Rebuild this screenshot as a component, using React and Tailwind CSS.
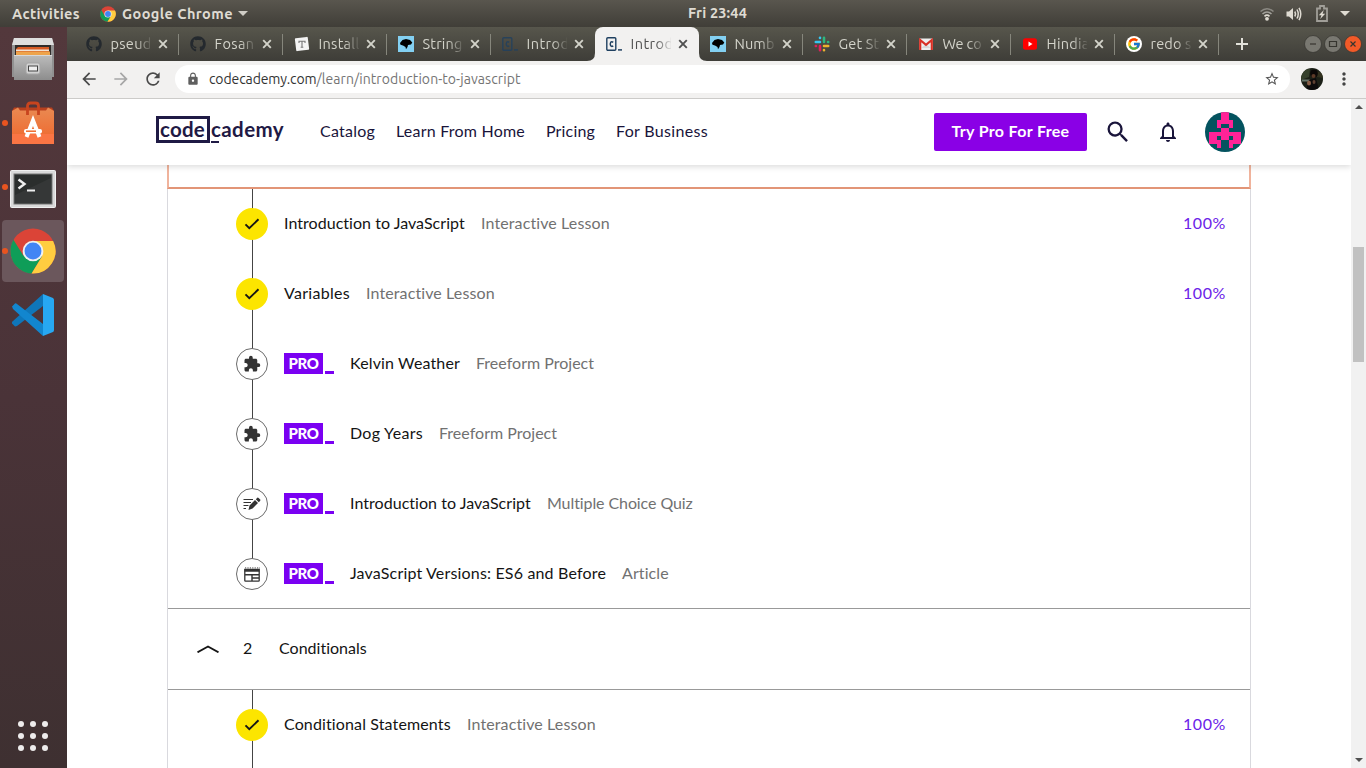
import { useLayoutEffect, useRef, useState } from 'react';
import { MdArrowBack, MdArrowForward, MdRefresh, MdLock, MdStarBorder, MdMoreVert, MdSearch, MdNotificationsNone, MdExtension, MdAdd } from 'react-icons/md';
import { FaGithub } from 'react-icons/fa';
import { FcGoogle } from 'react-icons/fc';

/* Text whose letter spacing is adjusted so that it fills a given width. */
function Fit({ w, className = '', children }) {
  const ref = useRef(null);
  const [ls, setLs] = useState(0);
  useLayoutEffect(() => {
    const natural = ref.current.getBoundingClientRect().width;
    setLs((w - natural) / String(children).length);
  }, [w, children]);
  return (
    <span className={'block shrink-0 whitespace-nowrap ' + className} style={{ width: w }}>
      <span ref={ref} className="inline-block" style={{ letterSpacing: ls }}>{children}</span>
    </span>
  );
}

function ChromeLogo({ className }) {
  return (
    <svg viewBox="0 0 48 48" className={className}>
      <circle cx="24" cy="24" r="23.5" fill="#db4437" />
      <path d="M3.6 12.3A23.5 23.5 0 0 0 22.5 47.5L33.5 29.5L24 24L14 29Z" fill="#0f9d58" />
      <path d="M24 13.5H45A23.5 23.5 0 0 1 22.5 47.5L33.5 29.5Z" fill="#ffcd40" />
      <circle cx="24" cy="24" r="10.8" fill="#f1f1f1" />
      <circle cx="24" cy="24" r="8.8" fill="#4285f4" />
    </svg>
  );
}

const Github = () => <FaGithub className="size-4 text-[#24292e]" />;
const Typo = () => (
  <svg viewBox="0 0 16 16" className="size-4">
    <rect x="1.5" y="1.5" width="13" height="13" rx="1" fill="#f4f4f4" transform="rotate(-7 8 8)" />
    <path d="M5 7V5.2H11V7M8 5.2V11.5M6.7 11.3H9.3" stroke="#777" strokeWidth="1.1" fill="none" />
  </svg>
);
const Mdn = () => (
  <svg viewBox="0 0 16 16" className="size-4">
    <rect width="16" height="16" fill="#83d0f2" />
    <path d="M2 7L4.5 4L8 3L12 4L14.3 6.5L13 8.5L10 9L9.5 11L8 13.2L7.5 11L5 9.5L2.5 8.8Z" fill="#000" />
  </svg>
);
const Cc = () => (
  <svg viewBox="0 0 16 16" className="size-4">
    <rect x="0.8" y="1.8" width="9" height="12.5" rx="1" fill="none" stroke="#1f4060" strokeWidth="1.4" />
    <path d="M7.2 6.3Q5.8 5.2 4.7 6.3Q3.7 8 4.7 9.8Q5.8 10.9 7.2 9.8" fill="none" stroke="#1f4060" strokeWidth="1.5" />
    <path d="M12 13.9H16" stroke="#1f4060" strokeWidth="1.5" />
  </svg>
);
const Slack = () => (
  <svg viewBox="0 0 16 16" className="size-4" strokeWidth="2.6" strokeLinecap="round">
    <path d="M1.8 6H6M6 1.8V2" stroke="#36c5f0" />
    <path d="M10 1.8V6M14.2 6H14" stroke="#2eb67d" />
    <path d="M10 10H14.2M10 14.2V14" stroke="#ecb22e" />
    <path d="M6 10V14.2M1.8 10H2" stroke="#e01e5a" />
  </svg>
);
const Gmail = () => (
  <svg viewBox="0 0 16 16" className="size-4">
    <rect x="1" y="2.5" width="14" height="11.5" rx="1" fill="#eee" />
    <path d="M3.3 12L8 8L12.7 12Z" fill="#d8d8d8" />
    <path d="M2.2 14V4L8 8.8L13.8 4V14" fill="none" stroke="#d93025" strokeWidth="2.2" />
  </svg>
);
const Youtube = () => (
  <svg viewBox="0 0 16 16" className="size-4">
    <rect x="1" y="2.3" width="14" height="11.4" rx="2.5" fill="#f00" />
    <path d="M6.5 5.5L10.5 8L6.5 10.5Z" fill="#fff" />
  </svg>
);
const Google = () => (
  <span className="flex size-4 items-center justify-center rounded-full bg-white"><FcGoogle className="size-3.5" /></span>
);

const tabs = [
  [Github, 'pseud', 41], [Github, 'Fosan', 40], [Typo, 'Install', 41], [Mdn, 'String', 40], [Cc, 'Introd', 43],
  [Cc, 'Introd', 43], [Mdn, 'Numb', 40], [Slack, 'Get St', 41], [Gmail, 'We co', 39], [Youtube, 'Hindia', 43], [Google, 'redo s', 41],
];

function Tab({ icon: Icon, label, w, active, dim, sep }) {
  return (
    <div className={'relative flex h-[34px] w-[104px] shrink-0 items-center pl-[11px] ' + (active ? 'rounded-t-lg bg-[#f2f1f0] text-[#505050]' : 'text-[#d3d3ca]')}>
      <span className={'w-4 ' + (dim ? 'opacity-80' : '')}><Icon /></span>
      <div className="ml-[8.5px] w-[40.5px] overflow-hidden text-[14.5px] leading-5 [mask-image:linear-gradient(90deg,#000_62%,transparent_105%)]">
        <Fit w={w}>{label}</Fit>
      </div>
      <svg viewBox="0 0 10 10" className="ml-[7px] size-[10px]"><path d="M1.200 1.200L8.800 8.800M8.800 1.200L1.200 8.800" fill="none" stroke="currentColor" strokeWidth="1.900" /></svg>
      {sep && <span className="absolute right-0 top-[7px] h-[21px] w-px bg-[#86867c]" />}
      {active && (
        <>
          <svg viewBox="0 0 8 8" className="absolute bottom-0 -left-2 size-2"><path d="M8 0V8H0Q8 8 8 0Z" fill="#f2f1f0" /></svg>
          <svg viewBox="0 0 8 8" className="absolute bottom-0 -right-2 size-2"><path d="M0 0V8H8Q0 8 0 0Z" fill="#f2f1f0" /></svg>
        </>
      )}
    </div>
  );
}

function TopBar() {
  return (
    <div className="grid h-[27px] grid-cols-[688px_60px_1fr] items-center bg-linear-to-b from-[#59564e] to-[#403e38] text-[14.5px] font-semibold leading-5 text-[#dfdbd2]">
      <div className="flex items-center pl-3">
        <Fit w={68}>Activities</Fit>
        <ChromeLogo className="ml-5 size-4" />
        <Fit w={111} className="ml-1.5">Google Chrome</Fit>
        <svg viewBox="0 0 10 5" className="ml-[5px] h-[5px] w-[10px]"><path d="M0 0H10L5 5Z" fill="#d0cdc6" /></svg>
      </div>
      <Fit w={59} className="-mt-px">Fri 23:44</Fit>
      <div className="flex items-center justify-end pr-4">
        <svg viewBox="0 0 14 14" className="size-[14px]" fill="none" strokeWidth="1.6">
          <path d="M0.5 4.5Q7 -1 13.5 4.5" stroke="#8b8983" /><path d="M2.5 7Q7 3 11.5 7" stroke="#a3a19b" />
          <path d="M4.5 9.3Q7 7 9.5 9.3" stroke="#dfdbd2" /><circle cx="7" cy="11.8" r="1.9" fill="#dfdbd2" />
        </svg>
        <svg viewBox="0 0 16 16" className="ml-3 size-4" fill="none" stroke="#dfdbd2" strokeWidth="1.5">
          <path d="M0.5 5.5H3L7 2V14L3 10.5H0.5Z" fill="#dfdbd2" stroke="none" />
          <path d="M8.8 5.5Q10.3 8 8.8 10.5M11 3.5Q13.5 8 11 12.5" /><path d="M13 1.8Q16.5 8 13 14.2" />
        </svg>
        <svg viewBox="0 0 12 17" className="ml-[14px] h-[17px] w-3">
          <path d="M1 3.5H4V1H8V3.5H11V16H1Z" fill="none" stroke="#a09e98" strokeWidth="1.8" />
          <path d="M7.8 5L2.8 10.300H5.5L4.2 14L9.2 8.700H6.5Z" fill="#dfdbd2" />
        </svg>
        <svg viewBox="0 0 10 5" className="ml-3 h-[5px] w-[10px]"><path d="M0 0H10L5 5Z" fill="#dfdbd2" /></svg>
      </div>
    </div>
  );
}

function DockItem({ children, running, active }) {
  return (
    <div className="relative flex h-16 w-full items-center justify-center">
      <div className={'flex size-[62px] items-center justify-center rounded-[4px] ' + (active ? 'bg-[#6b575c]' : '')}>{children}</div>
      {running && <span className="absolute left-[2px] top-[29px] size-[6px] rounded-full bg-[#e95420]" />}
    </div>
  );
}

function Dock() {
  return (
    <aside className="flex w-[67px] shrink-0 flex-col bg-linear-to-b from-[#53383c] via-[#4a3338] to-[#3e3031] pr-px">
      <DockItem>
        <svg viewBox="0 0 42 44" className="h-11 w-[42px]">
          <defs><linearGradient id="cab" x2="0" y2="1"><stop stopColor="#bcbcbc" /><stop offset="1" stopColor="#8d8d8d" /></linearGradient></defs>
          <path d="M2 1H40L42 8V40H0V8Z" fill="#919191" /><path d="M2 1H40L42 8H0Z" fill="#dedede" />
          <rect x="3" y="8" width="36" height="14" fill="#302c2a" />
          <path d="M6 10H37V22H4V12Z" fill="#d65b24" /><path d="M4 12.500H37V14H4Z" fill="#f0e2d6" /><path d="M4 14.500H38V22H4Z" fill="#eea44c" />
          <path d="M2 18H40V43H2Z" fill="url(#cab)" /><path d="M2 18H40V19H2Z" fill="#d8d8d8" />
          <rect x="14" y="26" width="14" height="11" rx="2" fill="#d2d2d2" stroke="#a5a5a5" />
          <rect x="16.5" y="29" width="9" height="5" fill="#eee" stroke="#444" />
        </svg>
      </DockItem>
      <DockItem running>
        <svg viewBox="0 0 42 44" className="h-11 w-[42px]">
          <defs><linearGradient id="bag" x2="0" y2="1"><stop stopColor="#e98a52" /><stop offset="1" stopColor="#f0652b" /></linearGradient></defs>
          <path d="M2 6.500H40L42 10H0Z" fill="#b8401e" /><path d="M0 10L6 6.500L8 9.500H34L36 6.500L42 10V43H0Z" fill="url(#bag)" />
          <path d="M0 33H42V43H0Z" fill="#fa7544" />
          <path d="M15.500 14V5Q15.500 2 18.500 2H23.500Q26.500 2 26.500 5V14" fill="none" stroke="#c8441e" strokeWidth="2.800" />
          <path d="M14.500 36L21 19.500L27.500 36" fill="none" stroke="#fff" strokeWidth="4" />
          <rect x="12" y="28" width="18" height="4.5" rx="2" fill="#fff" /><path d="M14 30.2H24" stroke="#ef6a2c" strokeWidth="1.5" />
        </svg>
      </DockItem>
      <DockItem running>
        <svg viewBox="0 0 46 38" className="mt-[3px] h-[38px] w-[46px]">
          <rect x="0.5" y="0.5" width="45" height="37" rx="1" fill="#d9d9d9" stroke="#f0f0f0" />
          <rect x="4" y="4" width="38" height="30" fill="#2b2e2d" stroke="#777" /><path d="M5 25L41 8V33H5Z" fill="#3c3e3d" opacity=".6" />
          <path d="M8.5 9.5L14.5 14L8.5 18.5" fill="none" stroke="#eee" strokeWidth="2.4" /><path d="M17 20.5H25" stroke="#eee" strokeWidth="2" />
        </svg>
      </DockItem>
      <DockItem running active><ChromeLogo className="size-[46px]" /></DockItem>
      <DockItem>
        <svg viewBox="0 0 42 42" className="size-[42px]">
          <path d="M31 0L31 12L5 32Q3 33 2 31.500L0 29.500Q-.5 28 1 27Z" fill="#0f76b9" />
          <path d="M0 12.500L3 9.500Q4 9 5 10L31 30V42L1 15Z" fill="#1286cf" />
          <path d="M31 0L41 4Q42 5 42 6V36Q42 37.500 41 38L31 42Z" fill="#27a8f2" />
        </svg>
      </DockItem>
      <div className="mt-auto mb-[17px] ml-[18px] grid w-[30px] grid-cols-3 gap-[6px]">
        {Array.from({ length: 9 }, (_, i) => <span key={i} className="size-[6px] rounded-full bg-[#eeecec]" />)}
      </div>
    </aside>
  );
}

function BrowserChrome() {
  return (
    <>
      <div className="flex h-[34px] items-center bg-linear-to-b from-[#57564c] to-[#3e3d38] pl-[8px] pr-1">
        {tabs.map(([icon, label, w], i) => (
          <Tab key={i} icon={icon} label={label} w={w} active={i === 5} dim={i === 4} sep={i !== 4 && i !== 5} />
        ))}
        <svg viewBox="0 0 12 12" className="ml-[17px] size-3"><path d="M6 0V12M0 6H12" stroke="#e2e1da" strokeWidth="2" /></svg>
        <div className="ml-auto flex items-center gap-[2px]">
          {['M6 9H12', 'M5.500 6.500H12.500V11.500H5.500Z', 'M6.500 6.500L11.500 11.500M11.500 6.500L6.500 11.500'].map((d, i) => (
            <svg key={d} viewBox="0 0 18 18" className="size-[18px]">
              <circle cx="9" cy="9" r="8.500" className={i === 2 ? 'fill-[#f25a28]' : 'fill-[#797871]'} stroke="#3a3934" strokeWidth=".8" />
              <path d={d} fill="none" stroke="#36352f" strokeWidth="1.200" />
            </svg>
          ))}
        </div>
      </div>
      <div className="flex h-[38px] items-center border-b border-[#cccbc9] bg-[#f2f1f0] pl-3">
        <MdArrowBack className="-mt-px size-5 text-[#4a4a4a]" />
        <MdArrowForward className="-mt-px ml-3 size-5 text-[#a6a6a6]" />
        <MdRefresh className="-mt-px ml-3 size-5 text-[#4a4a4a]" />
        <div className="-mt-px ml-3 flex h-7 w-[1115px] items-center rounded-full bg-white pl-[11px] pr-[10px] text-[14px] leading-5">
          <MdLock className="size-[14px] text-[#5f5f5f]" />
          <Fit w={107.5} className="ml-[9px] text-[#333]">codecademy.com</Fit>
          <Fit w={204} className="text-[#747474]">/learn/introduction-to-javascript</Fit>
          <MdStarBorder className="ml-auto size-4 text-[#555]" />
        </div>
        <svg viewBox="0 0 22 22" className="-mt-px ml-[11px] size-[22px]">
          <defs><clipPath id="face"><circle cx="11" cy="11" r="11" /></clipPath></defs>
          <g clipPath="url(#face)">
            <rect width="22" height="22" fill="#1c2017" /><path d="M0 2L9 1L8 9L0 12Z" fill="#35402b" /><path d="M14 3L22 5V10L16 9Z" fill="#32311f" />
            <ellipse cx="13" cy="5.500" rx="3.800" ry="4" fill="#0b0807" /><ellipse cx="12.500" cy="8" rx="2" ry="2" fill="#5d3a28" />
            <path d="M1 11.500H9L8 13.500H1Z" fill="#66756a" /><path d="M8 12L15 10L18 22H5Z" fill="#0c0b0c" /><ellipse cx="8" cy="15" rx="2" ry="2.500" fill="#8a5f48" /><ellipse cx="13" cy="14" rx="1.500" ry="2" fill="#5e4032" />
          </g>
        </svg>
        <MdMoreVert className="-mt-px ml-[11px] size-5 text-[#444]" />
      </div>
    </>
  );
}

const face = ['0000110000', '0000110000', '0001111000', '0001001000', '0000110000', '0111111110', '0110110110', '0111001110', '0001001000', '0000000000'];

function SiteHeader() {
  return (
    <header className="relative z-10 flex h-[66px] shrink-0 items-center bg-white pl-[89px] font-['Lato','Noto_Sans',sans-serif] text-[16px] leading-6 text-[#19143a] shadow-[0_2px_6px_rgba(0,0,0,0.14)]">
      <div className="-mt-[5px] flex h-[27px] w-[128px] items-center text-[20.5px] leading-[22px] font-bold text-[#1f1a45]">
        <div className="flex h-[27px] w-[54px] shrink-0 items-center border-[3px] border-[#1f1a45] pl-[1px]"><Fit w={45} className="-mt-px">code</Fit></div>
        <div className="relative flex h-[27px] items-center pl-px">
          <Fit w={73} className="-mt-px">cademy</Fit>
          <span className="absolute bottom-0 left-px h-[2px] w-2 bg-[#1f1a45]" />
        </div>
      </div>
      <nav className="mb-0.5 ml-[36px] flex">
        <Fit w={55}>Catalog</Fit>
        <Fit w={129} className="ml-[21px]">Learn From Home</Fit>
        <Fit w={49} className="ml-[21px]">Pricing</Fit>
        <Fit w={92} className="ml-[21px]">For Business</Fit>
      </nav>
      <div className="ml-auto flex h-full items-center pr-[106px]">
        <button className="flex h-[38px] w-[153px] items-center justify-center rounded-[2px] bg-[#8a00e6] text-[16px] font-bold text-white"><Fit w={118} className="mb-0.5">Try Pro For Free</Fit></button>
        <MdSearch className="ml-[17px] size-[28px]" />
        <MdNotificationsNone className="ml-[24px] size-6" />
        <svg viewBox="0 0 40 40" className="ml-[25px] size-10" shapeRendering="crispEdges">
          <defs><clipPath id="round"><circle cx="20" cy="20" r="20" /></clipPath></defs>
          <g clipPath="url(#round)">
            <rect width="40" height="40" fill="#04535f" />
            {face.flatMap((row, y) => [...row].map((c, x) => c === '1' && <rect key={x + '-' + y} x={x * 4} y={y * 4} width="4" height="4" fill="#ff2397" />))}
          </g>
        </svg>
      </div>
    </header>
  );
}

const QuizIcon = () => (
  <svg viewBox="0 0 18 14" className="h-[14px] w-[18px]">
    <path d="M0.500 2.500H10M0.500 5.500H8M0.500 8.500H5.500M0.500 11.500H3" stroke="#333" strokeWidth="1.200" />
    <path d="M5.500 13L6.500 8.500L12 3L15 6L9.500 11.500ZM12.800 2.200L14.300 .8Q15 .3 15.600 .9L17.200 2.500Q17.700 3 17.200 3.700L15.800 5.200Z" fill="#333" />
  </svg>
);
const ArticleIcon = () => (
  <svg viewBox="0 0 16 15" className="h-[15px] w-4" fill="none" stroke="#333">
    <path d="M.8 2.500H15.200V13.500Q15.200 14.200 14.500 14.200H1.500Q.8 14.200 .8 13.500Z" strokeWidth="1.300" />
    <path d="M.5 3.500H15.500" strokeWidth="2.500" /><path d="M1 .8H16" strokeWidth="1.200" strokeDasharray="1.200 1.200" opacity=".7" />
    <path d="M1 7.800H15M8 8V14M8 11H15" strokeWidth="1.400" />
  </svg>
);

function Node({ kind }) {
  if (kind === 'done') {
    return (
      <span className="relative flex size-8 shrink-0 items-center justify-center rounded-full bg-[#fce500]">
        <svg viewBox="0 0 16 12" className="h-3 w-4"><path d="M1.500 6.300L5.300 10.200L14.500 1.300" fill="none" stroke="#151515" strokeWidth="1.900" /></svg>
      </span>
    );
  }
  return (
    <span className="relative flex size-8 shrink-0 items-center justify-center rounded-full border border-[#6b6b6b] bg-white text-[#333]">
      {kind === 'project' && <MdExtension className="size-[18px]" />}
      {kind === 'quiz' && <QuizIcon />}
      {kind === 'article' && <ArticleIcon />}
    </span>
  );
}

const lessons = [
  ['done', 'Introduction to JavaScript', 181, 'Interactive Lesson', 129],
  ['done', 'Variables', 66, 'Interactive Lesson', 129],
  ['project', 'Kelvin Weather', 110, 'Freeform Project', 118],
  ['project', 'Dog Years', 73, 'Freeform Project', 118],
  ['quiz', 'Introduction to JavaScript', 181, 'Multiple Choice Quiz', 146],
  ['article', 'JavaScript Versions: ES6 and Before', 256, 'Article', 47],
];

function Lesson({ item: [kind, title, w, type, tw], last }) {
  return (
    <li className="relative flex h-[70px] shrink-0 items-center pl-[68px] pr-[24px]">
      <span className={'absolute left-[84px] top-0 w-px bg-[#444] ' + (last ? 'h-[35px]' : 'h-full')} />
      <Node kind={kind} />
      <div className="mb-0.5 flex flex-1 items-center">
        {kind !== 'done' && (
          <span className="ml-4 flex w-[50px] shrink-0 items-end gap-[2px]">
            <span className="flex h-[21px] w-[39px] items-center justify-center bg-[#7a00f2] text-[15px] leading-5 font-black text-white"><Fit w={30}>PRO</Fit></span>
            <span className="h-[3px] w-[9px] bg-[#7a00f2]" />
          </span>
        )}
        <Fit w={w} className="ml-4 text-[#141414]">{title}</Fit>
        <Fit w={tw} className="ml-4 text-[#717171]">{type}</Fit>
        {kind === 'done' && <Fit w={43} className="ml-auto text-[#6b22e8]">100%</Fit>}
      </div>
    </li>
  );
}

function Syllabus() {
  return (
    <main className="ml-[100px] flex min-h-0 w-[1084px] flex-1 flex-col bg-white font-['Lato','Noto_Sans',sans-serif] text-[16px] leading-6">
      <div className="h-[24px] w-[1084px] shrink-0 border-x-2 border-b-2 border-[#f0b39c] border-b-[#e29577]" />
      <div className="shrink-0 border-x border-[#d9d9de]">
        <ul className="flex flex-col">{lessons.map((l, i) => <Lesson key={i} item={l} last={i === 5} />)}</ul>
        <div className="-mt-px flex h-[82px] shrink-0 items-center border-y border-[#999] pl-[29px] text-[#141414]">
          <svg viewBox="0 0 22 8" className="h-2 w-[22px]"><path d="M.5 7.300L11 1.500L21.500 7.300" fill="none" stroke="#151515" strokeWidth="1.900" /></svg>
          <Fit w={10} className="ml-[24px] mb-0.5">2</Fit>
          <Fit w={88} className="ml-[26px] mb-0.5">Conditionals</Fit>
        </div>
        <ul className="flex flex-col">
          <Lesson item={['done', 'Conditional Statements', 167, 'Interactive Lesson', 129]} />
          <li className="pl-[84px]"><div className="h-[20px] w-px bg-[#444]" /></li>
        </ul>
      </div>
    </main>
  );
}

export default function App() {
  return (
    <div className="flex h-[768px] w-[1366px] flex-col overflow-hidden bg-white font-['Ubuntu','Noto_Sans',sans-serif]">
      <TopBar />
      <div className="flex min-h-0 flex-1">
        <Dock />
        <div className="flex min-w-0 flex-1 flex-col">
          <BrowserChrome />
          <div className="flex min-h-0 flex-1">
            <div className="flex min-w-0 flex-1 flex-col overflow-hidden"><SiteHeader /><Syllabus /></div>
            <div className="flex w-[15px] flex-col items-center bg-[#f1f1f1] py-1.5">
              <svg viewBox="0 0 8 4" className="h-1 w-2"><path d="M0 4H8L4 0Z" fill="#505050" /></svg>
              <div className="mt-[138px] -ml-px h-[115px] w-[11px] bg-[#c1c1c1]" />
              <svg viewBox="0 0 8 4" className="mt-auto h-1 w-2"><path d="M0 0H8L4 4Z" fill="#505050" /></svg>
            </div>
          </div>
        </div>
      </div>
    </div>
  );
}
